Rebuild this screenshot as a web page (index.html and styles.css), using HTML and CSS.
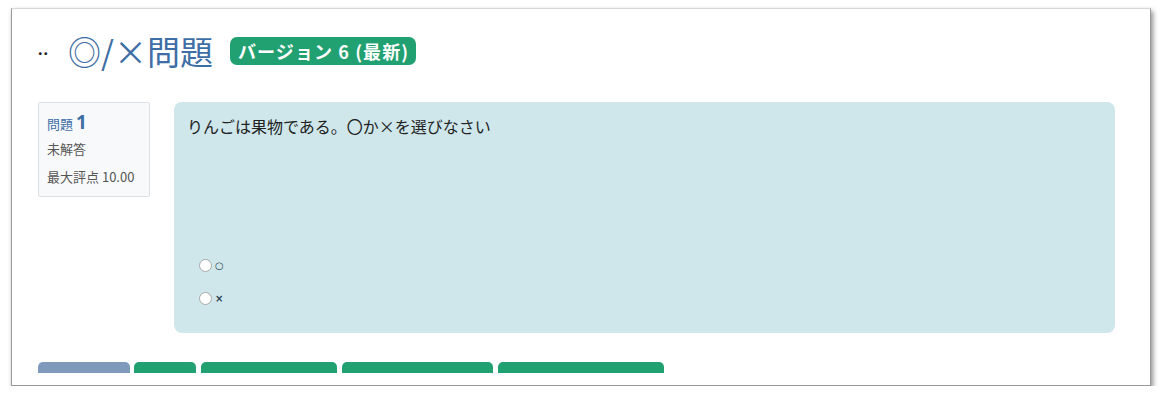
FILE: index.html
```html
<!DOCTYPE html>
<html lang="ja">
<head>
    <meta charset="UTF-8">
    <title>◎/×問題</title>
    <link rel="stylesheet" href="styles.css">
</head>
<body>

    <div class="frame">
        <div class="screen">
            <div class="page-header">
                <span class="crumb">..</span>
                <h1>◎/×問題</h1>
                <span class="badge">バージョン 6 (最新)</span>
            </div>

            <div class="question-row">
                <div class="info">
                    <p class="qno">問題 <span class="qnum">1</span></p>
                    <p class="state">未解答</p>
                    <p class="grade">最大評点 10.00</p>
                </div>
                <div class="content">
                    <p class="qtext">りんごは果物である。〇か×を選びなさい</p>
                    <div class="answers">
                        <label class="answer"><input type="radio" name="q1"> <span>○</span></label>
                        <label class="answer"><input type="radio" name="q1"> <span>×</span></label>
                    </div>
                </div>
            </div>

            <div class="buttons">
                <span class="btn btn-gray w1"></span>
                <span class="btn w2"></span>
                <span class="btn w3"></span>
                <span class="btn w4"></span>
                <span class="btn w5"></span>
            </div>
        </div>
    </div>

</body>
</html>
```

FILE: styles.css
```css
body {
    margin: 0;
    padding: 0;
    background-color: #ffffff;
    font-family: "Noto Sans", "Noto Sans CJK JP", sans-serif;
}

.frame {
    margin: 8px 0 0 11px;
    width: 1138px;
    height: 376px;
    border: 1px solid #d6d6d6;
    border-left-color: #9a9a9a;
    border-right-color: #999;
    border-bottom-color: #999;
    box-shadow: 2px 3px 5px rgba(0, 0, 0, 0.45);
    background-color: #ffffff;
}

.screen {
    height: 364px;
    overflow: hidden;
    padding: 0 35px 0 26px;
}

.page-header {
    display: flex;
    align-items: center;
    height: 40px;
    padding-top: 22px;
}

.crumb {
    color: #222;
    font-size: 16px;
    font-weight: bold;
    letter-spacing: 1px;
    margin-right: 19px;
    position: relative;
    top: -2px;
}

h1 {
    margin: 0;
    font-size: 33px;
    font-weight: normal;
    color: #3d6ea5;
    font-family: "Noto Sans CJK JP", sans-serif;
}

.badge {
    margin-left: 17px;
    background-color: #21a071;
    color: #ffffff;
    font-weight: bold;
    font-size: 18px;
    letter-spacing: 1.1px;
    height: 28px;
    line-height: 28px;
    padding: 0 7px 0 8px;
    border-radius: 7px;
    font-family: "Noto Sans CJK JP", sans-serif;
}

.question-row {
    display: flex;
    gap: 24px;
    margin-top: 31px;
}

.info {
    width: 110px;
    height: 93px;
    border: 1px solid #dcdfe3;
    background-color: #f8f9fb;
    border-radius: 2px;
}

.info p {
    margin: 0;
    padding-left: 8px;
    font-size: 13px;
    color: #555;
    font-family: "Noto Sans CJK JP", sans-serif;
}

.qno {
    color: #3d6ea5 !important;
    height: 26px;
    line-height: 26px;
    padding-top: 6px;
}

.qnum {
    font-size: 19px;
    font-weight: bold;
    font-family: "Noto Sans", sans-serif;
}

.state {
    line-height: 28px;
}

.grade {
    line-height: 28px;
}

.content {
    flex: 1;
    height: 231px;
    background-color: #cfe7eb;
    border-radius: 8px;
    padding: 0 13px;
}

.qtext {
    margin: 12px 0 0 0;
    font-size: 16px;
    line-height: 24px;
    color: #222;
    font-family: "Noto Sans CJK JP", sans-serif;
}

.answers {
    margin-top: 111px;
    padding-left: 12px;
}

.answer {
    display: flex;
    align-items: center;
    height: 33px;
    font-size: 12px;
    color: #2c3e50;
}

.answer span {
    font-family: "DejaVu Sans", sans-serif;
    font-size: 10px;
    font-weight: bold;
}

.answer input {
    appearance: none;
    width: 13px;
    height: 13px;
    margin: 0 3px 0 0;
    border: 1px solid #a8a8a8;
    border-radius: 50%;
    background-color: #ffffff;
}

.buttons {
    display: flex;
    gap: 4px;
    margin-top: 29px;
}

.btn {
    display: block;
    height: 36px;
    background-color: #21a071;
    border-radius: 5px;
}

.btn-gray {
    background-color: #7f9bbb;
}

.w1 { width: 92px; }
.w2 { width: 62px; }
.w3 { width: 136px; margin-left: 1px; }
.w4 { width: 151px; margin-left: 1px; }
.w5 { width: 166px; margin-left: 1px; }
```
